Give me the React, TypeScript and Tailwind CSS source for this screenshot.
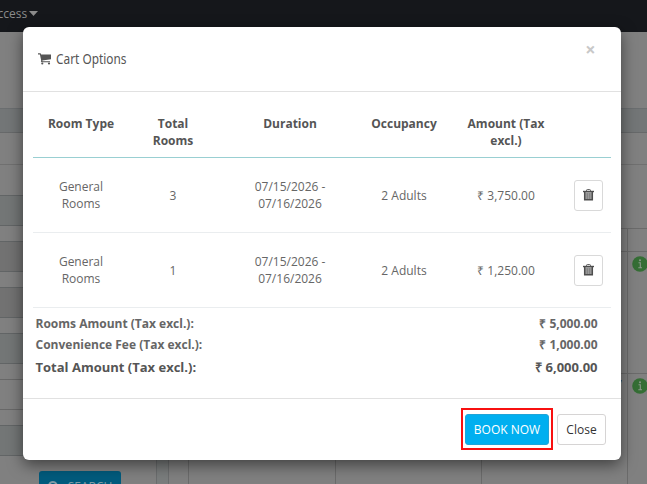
import React from 'react';
import { FaSearch } from 'react-icons/fa';

interface CartItem {
  roomType: string;
  rooms: number;
  from: string;
  to: string;
  occupancy: string;
  amount: string;
}

const items: CartItem[] = [
  { roomType: 'General Rooms', rooms: 3, from: '07/15/2026', to: '07/16/2026', occupancy: '2 Adults', amount: '₹ 3,750.00' },
  { roomType: 'General Rooms', rooms: 1, from: '07/15/2026', to: '07/16/2026', occupancy: '2 Adults', amount: '₹ 1,250.00' },
];

const CartIcon: React.FC = () => (
  <svg width="13" height="12" viewBox="0 0 13 12" fill="#555" className="mt-px shrink-0">
    <path d="M0 .3H2.6L3.1 1.6H13V6.2L4.3 7.4L4.5 8.3H12V9.3H3.4L2.9 8.2L3.2 7.4L1.9 1.4H0Z" />
    <circle cx="4.3" cy="10.5" r="1.1" />
    <circle cx="11" cy="10.5" r="1.1" />
  </svg>
);

const TrashIcon: React.FC = () => (
  <svg width="11" height="12" viewBox="0 0 11 12" fill="none">
    <path d="M3.5 2V1.4Q3.5.6 4.3.6H6.7Q7.5.6 7.5 1.4V2" stroke="#555" />
    <path d="M0 1.8H11V3.2H0Z" fill="#4d4d4d" />
    <path d="M1.7 3V10.8H9.3V3" fill="#9b9b9b" stroke="#4d4d4d" strokeWidth="1.5" />
    <path d="M4.3 4.2V10M6.7 4.2V10" stroke="#777" strokeWidth=".8" />
  </svg>
);

const InfoBadge: React.FC = () => (
  <svg width="16" height="16" viewBox="0 0 16 16" className="shrink-0">
    <circle cx="8" cy="8" r="7.8" fill="#356e35" />
    <path d="M6.5 6.7H8.3V11.7M6.3 11.7H10" stroke="#899889" strokeWidth="1.1" fill="none" />
    <circle cx="8" cy="4.2" r="1" fill="#899889" />
  </svg>
);

// Search form behind the dialog
const SearchPanel: React.FC = () => (
  <div className="flex w-[157px] shrink-0 flex-col border-r border-[#6b6d6e]">
    <div className="h-[77px] border-b border-[#6b6e70]" />
    <div className="h-6 border-b border-[#67696a] bg-[#737677]" />
    <div className="h-8 border-b border-[#707070]" />
    <div className="h-[30px]" />
    <div className="h-[31px] border-y border-[#626566] bg-[#737676]" />
    <div className="h-[15px]" />
    <div className="h-[31px] border-y border-[#626566] bg-[#727272]" />
    <div className="h-[15px]" />
    <div className="h-[31px] border-y border-[#626566] bg-[#727272]" />
    <div className="h-[15px]" />
    <div className="h-[31px] border-y border-[#626566] bg-[#737676]" />
    <div className="h-[15px]" />
    <div className="h-[31px] border-y border-[#686868]" />
    <div className="h-[15px]" />
    <div className="h-[31px] border-y border-[#626566] bg-[#737676]" />
    <div className="px-[39px] pt-[15px]">
      <div className="flex h-[31px] w-[82px] items-center justify-center gap-2 rounded-[3px] bg-[#005b7d] text-xs text-[#7f9ba6]">
        <FaSearch size={12} />
        SEARCH
      </div>
    </div>
  </div>
);

const CalendarPanel: React.FC = () => (
  <div className="flex flex-1 flex-col">
    <div className="h-[77px] shrink-0 border-b border-[#6b6e70]" />
    <div className="h-6 shrink-0 border-b border-[#67696a] bg-[#737677]" />
    <div className="h-8 shrink-0 border-b border-[#707070]" />
    <div className="h-16 shrink-0 border-b border-[#6b6b6b]" />
    <div className="flex flex-1">
      <div className="w-5 shrink-0 border-r border-[#6b6b6b]" />
      <div className="w-[147px] shrink-0 border-r border-[#6b6b6b]" />
      <div className="w-[146px] shrink-0 border-r border-[#6b6b6b]" />
      <div className="flex w-[146px] shrink-0 flex-col border-r border-[#6b6b6b]">
        <div className="h-[23px] border-b border-[#6b6b6b]" />
        <div className="h-[122px] border-b border-[#6b6b6b]" />
        <div className="pt-1 pr-[5px] text-right text-[10px] leading-3 text-[#222]">7</div>
      </div>
      <div className="min-w-0 flex-1 overflow-hidden">
        <div className="h-[23px] border-b border-[#6b6b6b]" />
        <div className="h-[122px] border-b border-[#6b6b6b] pt-[4px] pl-1"><InfoBadge /></div>
        <div className="pt-[4px] pl-1"><InfoBadge /></div>
      </div>
    </div>
  </div>
);

const CartTable: React.FC = () => (
  <table className="w-full table-fixed border-separate border-spacing-0 text-center text-xs leading-[17px] text-[#666]">
    <colgroup>
      <col className="w-24" />
      <col className="w-22" />
      <col className="w-[146px]" />
      <col className="w-[82px]" />
      <col className="w-[122px]" />
      <col className="w-11" />
    </colgroup>
    <thead>
      <tr className="h-[56px] align-top text-[#555] *:border-b *:border-[#99cfd2] *:pt-[13px]">
        <th>Room Type</th>
        <th>Total<br />Rooms</th>
        <th>Duration</th>
        <th>Occupancy</th>
        <th>Amount (Tax<br />excl.)</th>
        <th />
      </tr>
    </thead>
    <tbody>
      {items.map((item, i) => (
        <tr key={i} className="h-[75px] *:border-b *:border-[#eaedef]">
          <td className="px-5">{item.roomType}</td>
          <td>{item.rooms}</td>
          <td>{item.from} -<br />{item.to}</td>
          <td>{item.occupancy}</td>
          <td>{item.amount}</td>
          <td className="pr-[2px]">
            <button className="mx-auto flex h-[31px] w-[29px] items-center justify-center rounded-[3px] border border-[#d9d9d9]">
              <TrashIcon />
            </button>
          </td>
        </tr>
      ))}
    </tbody>
  </table>
);

const CartDialog: React.FC = () => (
  <div className="flex h-[433px] w-[598px] flex-col rounded-md bg-white shadow-[0_5px_15px_rgba(0,0,0,0.5)]">
    <div className="flex h-[65px] shrink-0 justify-between border-b border-[#e1e1e1] pt-[15px] pr-[25.5px] pl-[15px]">
      <h4 className="flex h-8 items-center gap-[5px] text-[#555]">
        <CartIcon />
        <span className="w-20 origin-left scale-x-[0.79] font-['Noto_Sans'] text-[15px] whitespace-nowrap">Cart Options</span>
      </h4>
      <span className="-mt-px h-4 text-lg leading-4 font-bold text-[#c8c8c8]">×</span>
    </div>

    <div className="flex h-[307px] shrink-0 flex-col border-b border-[#e1e1e1] px-[10px] pt-[10px]">
      <CartTable />
      <div className="flex flex-col pt-[5px] pr-[13.5px] pl-[2.5px] text-xs leading-[21px] font-bold text-[#666]">
        <div className="flex justify-between">
          <span>Rooms Amount (Tax excl.):</span>
          <span>₹ 5,000.00</span>
        </div>
        <div className="flex justify-between">
          <span>Convenience Fee (Tax excl.):</span>
          <span>₹ 1,000.00</span>
        </div>
        <div className="flex justify-between pt-[2px] text-[13px] text-[#555]">
          <span>Total Amount (Tax excl.):</span>
          <span>₹ 6,000.00</span>
        </div>
      </div>
    </div>

    <div className="flex flex-1 items-start justify-end gap-1 pt-[9px] pr-[15px] text-xs">
      <div className="h-[42px] border-2 border-[#f81010] px-[2px] pt-1">
        <button className="block h-[31px] w-[84px] rounded-[3px] border border-[#1fa4d8] bg-[#00aff0] text-white">BOOK NOW</button>
      </div>
      <button className="mt-[6px] h-[31px] w-[49px] rounded-[3px] border border-[#d6d4d4] text-[#333]">Close</button>
    </div>
  </div>
);

export default function App() {
  return (
    <div className="relative h-[484px] w-[647px] overflow-hidden bg-[#808080] font-['Open_Sans',sans-serif]">
      <div className="flex h-full flex-col">
        <header className="flex h-8 shrink-0 items-start bg-[#15171b] pt-[5px] text-xs leading-[17px] text-[#8b8b8b]">
          <span className="-ml-[10px]">Access</span>
          <svg width="9" height="5" viewBox="0 0 9 5" fill="#8b8b8b" className="mt-[6px] ml-[2px]">
            <path d="M0 0H9L4.5 5Z" />
          </svg>
        </header>
        <div className="flex flex-1">
          <SearchPanel />
          <div className="w-3 shrink-0 border-r border-[#6b6d6e] bg-[#7a7d7d]" />
          <CalendarPanel />
        </div>
      </div>
      <div className="absolute inset-0 flex items-start pt-[27px] pl-[23px]">
        <CartDialog />
      </div>
    </div>
  );
}
